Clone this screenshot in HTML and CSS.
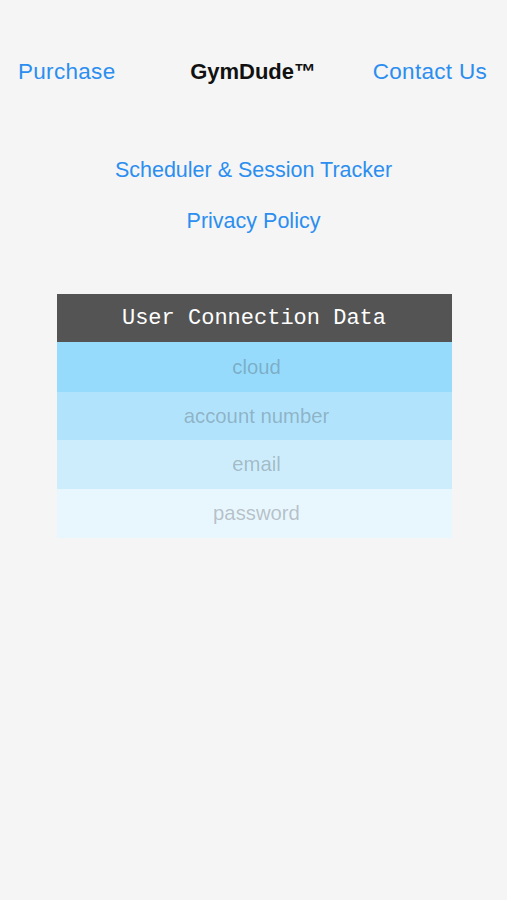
FILE: index.html
```html
<!DOCTYPE html>
<html lang="en">
<head>
<meta charset="utf-8">
<title>GymDude</title>
<link rel="stylesheet" href="styles.css">
</head>
<body>
<div class="page">
  <header class="topbar">
    <a class="link" href="#">Purchase</a>
    <span class="title">GymDude™</span>
    <a class="link" href="#">Contact Us</a>
  </header>
  <nav class="links">
    <a class="link" href="#">Scheduler &amp; Session Tracker</a>
    <a class="link" href="#">Privacy Policy</a>
  </nav>
  <section class="card">
    <div class="card-head">User Connection Data</div>
    <div class="row row1">cloud</div>
    <div class="row row2">account number</div>
    <div class="row row3">email</div>
    <div class="row row4">password</div>
  </section>
</div>
</body>
</html>
```
FILE: styles.css
```css
html, body {
  margin: 0;
  padding: 0;
  background: #f5f5f5;
}
body {
  font-family: "Liberation Sans", Arial, sans-serif;
  width: 507px;
  height: 900px;
}
.page {
  padding-top: 59px;
  display: flex;
  flex-direction: column;
  align-items: center;
}
.topbar {
  width: 100%;
  box-sizing: border-box;
  padding: 0 20px 0 18px;
  display: flex;
  justify-content: space-between;
  align-items: center;
  height: 26px;
}
.link {
  color: #2b8ef0;
  text-decoration: none;
  font-size: 22px;
  line-height: 26px;
}
.topbar .link {
  font-size: 22.5px;
  letter-spacing: 0.3px;
}
.title {
  font-size: 22px;
  font-weight: bold;
  color: #111;
  line-height: 26px;
  margin-left: 18px;
}
.links {
  margin-top: 72px;
  display: flex;
  flex-direction: column;
  align-items: center;
  gap: 25px;
}
.links .link {
  font-size: 21.5px;
}
.card {
  margin-top: 60px;
  width: 395px;
  margin-left: 1px;
}
.card-head {
  height: 48px;
  background: #545454;
  color: #fff;
  font-family: "Liberation Mono", "Courier New", monospace;
  font-size: 22px;
  display: flex;
  align-items: center;
  justify-content: center;
}
.row {
  height: 49px;
  display: flex;
  align-items: center;
  justify-content: center;
  padding-left: 5px;
  font-size: 20.3px;
  color: rgba(60, 60, 67, 0.3);
}
.row1 { background: #96dbfc; height: 50px; }
.row2 { background: #b1e3fc; height: 48px; }
.row3 { background: #cdedfd; }
.row4 { background: #e8f6fe; }
```
